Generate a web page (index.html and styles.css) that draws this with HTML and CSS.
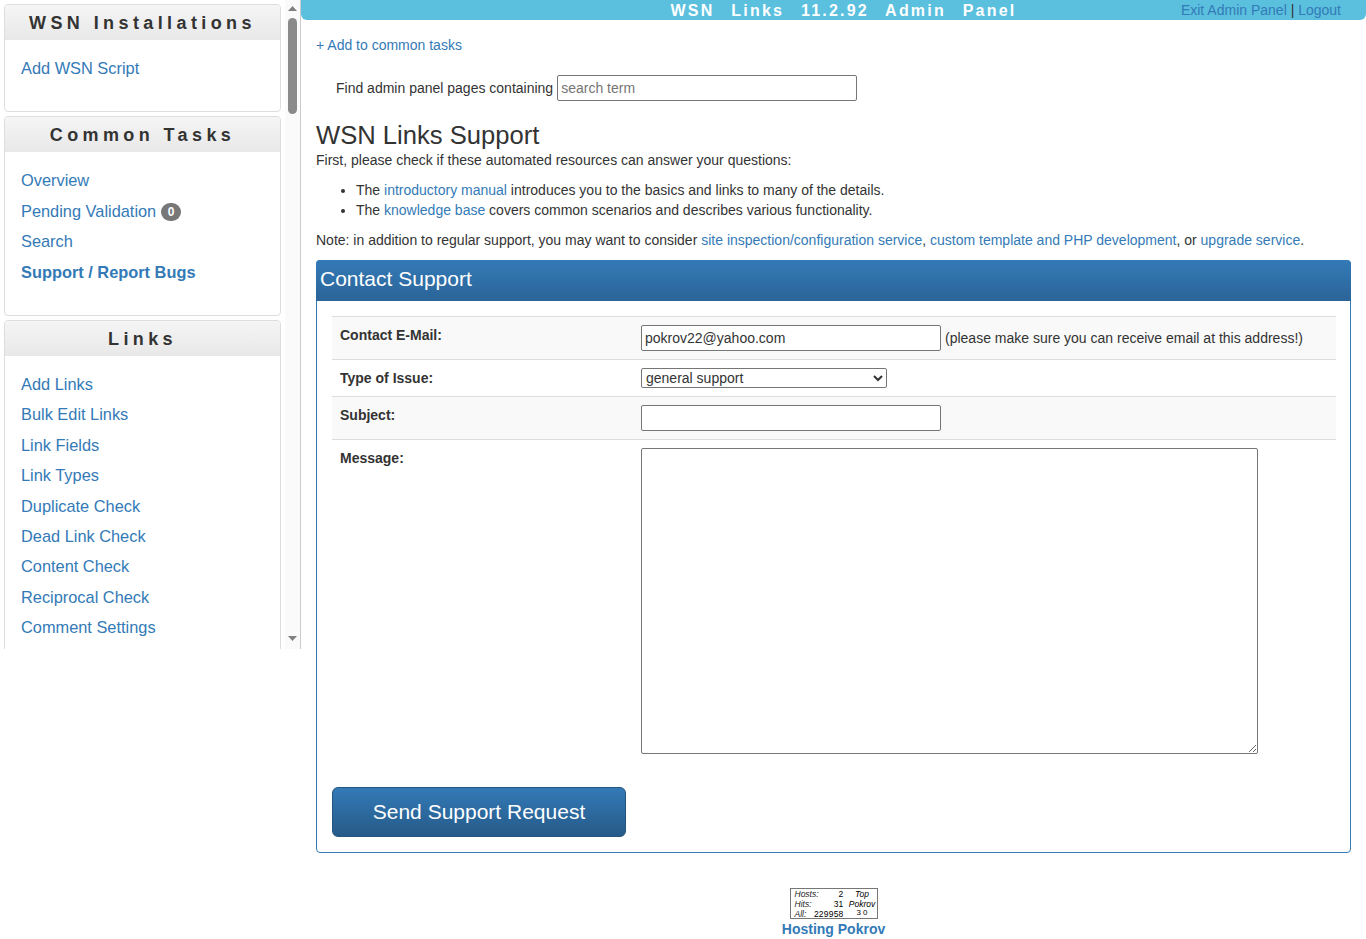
FILE: index.html
```html
<!DOCTYPE html>
<html lang="en">
<head>
<meta charset="utf-8">
<title>WSN Links Support</title>
<link rel="stylesheet" href="styles.css">
</head>
<body>
<div class="layout">
  <aside class="sidebar">
    <div class="sidebar-inner">
      <section class="side-panel panel-install">
        <h2 class="side-title">WSN Installations</h2>
        <ul class="side-list"><li><a href="#">Add WSN Script</a></li></ul>
      </section>
      <section class="side-panel panel-common">
        <h2 class="side-title">Common Tasks</h2>
        <ul class="side-list">
          <li><a href="#">Overview</a></li>
          <li><a href="#">Pending Validation</a> <span class="badge">0</span></li>
          <li><a href="#">Search</a></li>
          <li><a href="#" class="current">Support / Report Bugs</a></li>
        </ul>
      </section>
      <section class="side-panel panel-links">
        <h2 class="side-title">Links</h2>
        <ul class="side-list">
          <li><a href="#">Add Links</a></li>
          <li><a href="#">Bulk Edit Links</a></li>
          <li><a href="#">Link Fields</a></li>
          <li><a href="#">Link Types</a></li>
          <li><a href="#">Duplicate Check</a></li>
          <li><a href="#">Dead Link Check</a></li>
          <li><a href="#">Content Check</a></li>
          <li><a href="#">Reciprocal Check</a></li>
          <li><a href="#">Comment Settings</a></li>
        </ul>
      </section>
    </div>
    <div class="scrollbar" aria-hidden="true">
      <svg class="arrow arrow-up" width="9" height="5" viewBox="0 0 9 5"><path d="M4.5 0L9 5H0z"/></svg>
      <div class="thumb"></div>
      <svg class="arrow arrow-down" width="9" height="5" viewBox="0 0 9 5"><path d="M0 0H9L4.5 5z"/></svg>
    </div>
  </aside>
  <div class="page">
    <header class="topbar">
      <div class="topbar-title">WSN Links 11.2.92 Admin Panel</div>
      <div class="topbar-links"><a href="#">Exit Admin Panel</a> | <a href="#">Logout</a></div>
    </header>
    <main class="content">
      <p class="common-link"><a href="#">+ Add to common tasks</a></p>
      <form class="finder">
        <label for="find">Find admin panel pages containing</label>
        <input id="find" class="field" type="text" placeholder="search term">
      </form>
      <h1 class="page-title">WSN Links Support</h1>
      <p class="intro">First, please check if these automated resources can answer your questions:</p>
      <ul class="resources">
        <li>The <a href="#">introductory manual</a> introduces you to the basics and links to many of the details.</li>
        <li>The <a href="#">knowledge base</a> covers common scenarios and describes various functionality.</li>
      </ul>
      <p class="note">Note: in addition to regular support, you may want to consider <a href="#">site inspection/configuration service</a>, <a href="#">custom template and PHP development</a>, or <a href="#">upgrade service</a>.</p>
      <section class="contact">
        <h2 class="contact-head">Contact Support</h2>
        <form class="contact-body">
          <table class="contact-table">
            <tr class="row-email">
              <th>Contact E-Mail:</th>
              <td><div class="email-line"><input class="field" type="text" value="pokrov22@yahoo.com"><span>(please make sure you can receive email at this address!)</span></div></td>
            </tr>
            <tr class="row-type">
              <th>Type of Issue:</th>
              <td><select class="issue"><option>general support</option></select></td>
            </tr>
            <tr class="row-subject">
              <th>Subject:</th>
              <td><input class="field field-block" type="text"></td>
            </tr>
            <tr class="row-message">
              <th>Message:</th>
              <td><textarea class="message"></textarea></td>
            </tr>
          </table>
          <button class="send" type="button">Send Support Request</button>
        </form>
      </section>
      <footer class="foot">
        <div class="counter">
          <span class="c-label">Hosts:</span><span class="c-num">2</span><span class="c-top">Top</span>
          <span class="c-label">Hits:</span><span class="c-num">31</span><span class="c-top">Pokrov</span>
          <span class="c-label">All:</span><span class="c-num">229958</span><span class="c-rank">30</span>
        </div>
        <a class="host" href="#">Hosting Pokrov</a>
      </footer>
    </main>
  </div>
</div>
</body>
</html>
```
FILE: styles.css
```css
* { box-sizing: border-box; }
html, body { margin: 0; padding: 0; background: #fff; }
body {
  font-family: "Liberation Sans", Arial, sans-serif;
  font-size: 14px;
  line-height: 20px;
  color: #333;
}
a { color: #337ab7; text-decoration: none; }
p { margin: 0; }

.layout { display: flex; align-items: flex-start; }

.sidebar {
  flex: 0 0 301px;
  display: flex;
  width: 301px;
  height: 649px;
  overflow: hidden;
  border-right: 1px solid #ccc;
}
.sidebar-inner { flex: 0 0 285px; height: 649px; overflow: hidden; padding: 4px 4px 0; }

.scrollbar {
  flex: 0 0 15px;
  display: flex;
  flex-direction: column;
  align-items: center;
  height: 649px;
  padding-top: 6px;
  background: #fafafa;
}
.arrow { display: block; fill: #808080; flex: none; }
.thumb {
  flex: none;
  width: 9px;
  height: 96px;
  margin: 7px 0 0;
  border-radius: 5px;
  background: #8a8a8a;
}
.arrow-down { margin-top: 522px; }

.side-panel {
  border: 1px solid #ddd;
  border-radius: 4px;
  margin-bottom: 4px;
  background: #fff;
  height: 108px;
  width: 277px;
}
.panel-common { height: 200px; }
.panel-links { height: 3000px; }

.side-title {
  margin: 0;
  height: 35px;
  font-size: 18px;
  line-height: 37px;
  font-weight: 700;
  letter-spacing: 4.4px;
  text-align: center;
  color: #333;
  background: linear-gradient(#f5f5f5, #e8e8e8);
  border-radius: 3px 3px 0 0;
}

.side-list { list-style: none; margin: 0; padding: 17px 16px 0; font-size: 16.38px; line-height: 23.4px; }
.panel-common .side-list { padding-top: 17.4px; }
.side-list li { margin-bottom: 7px; white-space: nowrap; }
.current { font-weight: 700; }
.badge {
  display: inline-block;
  min-width: 20px;
  height: 18px;
  padding: 0 7px;
  border-radius: 10px;
  background: #777;
  color: #fff;
  font-size: 12px;
  font-weight: 700;
  line-height: 18px;
  text-align: center;
  vertical-align: 1px;
}

.page { flex: 1; min-width: 0; }

.topbar {
  display: grid;
  grid-template-columns: 1fr auto 1fr;
  height: 20px;
  padding-left: 20px;
  background: #5bc0de;
  border-radius: 0 0 6px 6px;
  line-height: 20px;
}
.topbar-title {
  grid-column: 2;
  color: #fff;
  font-size: 16px;
  font-weight: 700;
  line-height: 21px;
  letter-spacing: 2.2px;
  word-spacing: 10.2px;
  white-space: nowrap;
}
.topbar-links { grid-column: 3; justify-self: end; padding-right: 25px; white-space: nowrap; }

.content { padding: 15px 15px 0; }

.common-link { margin-bottom: 20px; }

.finder { display: flex; align-items: center; gap: 4px; padding-left: 20px; height: 26px; }

.field {
  width: 300px;
  height: 26px;
  padding: 1px 3px;
  border: 1px solid #767676;
  border-radius: 2px;
  background: #fff;
  color: #333;
  font: 14px "Liberation Sans", Arial, sans-serif;
}
.field-block { display: block; }
.field::placeholder { color: #757575; }

.page-title {
  margin: 20px 0 0;
  font-size: 25.6px;
  font-weight: 400;
  line-height: 28px;
  color: #333;
}
.intro { margin-top: 1px; }

.resources { margin: 10px 0; padding-left: 40px; }

.contact {
  margin-top: 10px;
  border: 1px solid #337ab7;
  border-radius: 4px;
  height: 593px;
}
.contact-head {
  margin: -1px -1px 0;
  height: 41px;
  padding: 0 4px;
  font-size: 21px;
  font-weight: 400;
  line-height: 38px;
  color: #fff;
  background: linear-gradient(#337ab7, #2b6498);
  border-radius: 4px 4px 0 0;
}
.contact-body { padding: 15px 15px 0; }

.contact-table { width: 1004px; table-layout: fixed; border-collapse: collapse; }
.contact-table th, .contact-table td {
  padding: 8px;
  border-top: 1px solid #ddd;
  vertical-align: top;
  text-align: left;
}
.contact-table th { width: 301px; font-weight: 700; }
.row-email, .row-subject { background: #f9f9f9; }
.email-line { display: flex; align-items: center; gap: 4px; white-space: nowrap; height: 26px; }

.issue {
  display: block;
  width: 246px;
  height: 20px;
  padding: 0;
  border: 1px solid #767676;
  border-radius: 2px;
  background: #fff;
  color: #333;
  font: 14px "Liberation Sans", Arial, sans-serif;
}
.message {
  display: block;
  width: 617px;
  height: 306px;
  padding: 2px;
  border: 1px solid #767676;
  border-radius: 2px;
  font: 14px "Liberation Sans", Arial, sans-serif;
}

.send {
  display: block;
  width: 294px;
  height: 50px;
  margin-top: 25px;
  border: 1px solid #245580;
  border-radius: 6px;
  background: linear-gradient(#337ab7, #265a88);
  color: #fff;
  font: 21px "Liberation Sans", Arial, sans-serif;
}

.foot {
  display: flex;
  flex-direction: column;
  align-items: center;
  margin-top: 35px;
}
.counter {
  display: grid;
  grid-template-columns: 24px 25px 33px;
  grid-auto-rows: 10px;
  width: 88px;
  height: 31px;
  padding: 0 0 0 4px;
  border: 1px solid #777;
  background: #fff;
  color: #000;
  font-size: 8.5px;
  line-height: 10px;
  white-space: nowrap;
}
.c-label { font-style: italic; color: #222; }
.c-num { font-size: 8.5px; letter-spacing: .2px; justify-self: end; }
.c-top { font-style: italic; text-align: center; padding-left: 4px; }
.c-rank { font-size: 8px; text-align: center; letter-spacing: 2px; line-height: 8px; padding-left: 6px; }
.host { line-height: 20px; font-weight: 700; }
```
